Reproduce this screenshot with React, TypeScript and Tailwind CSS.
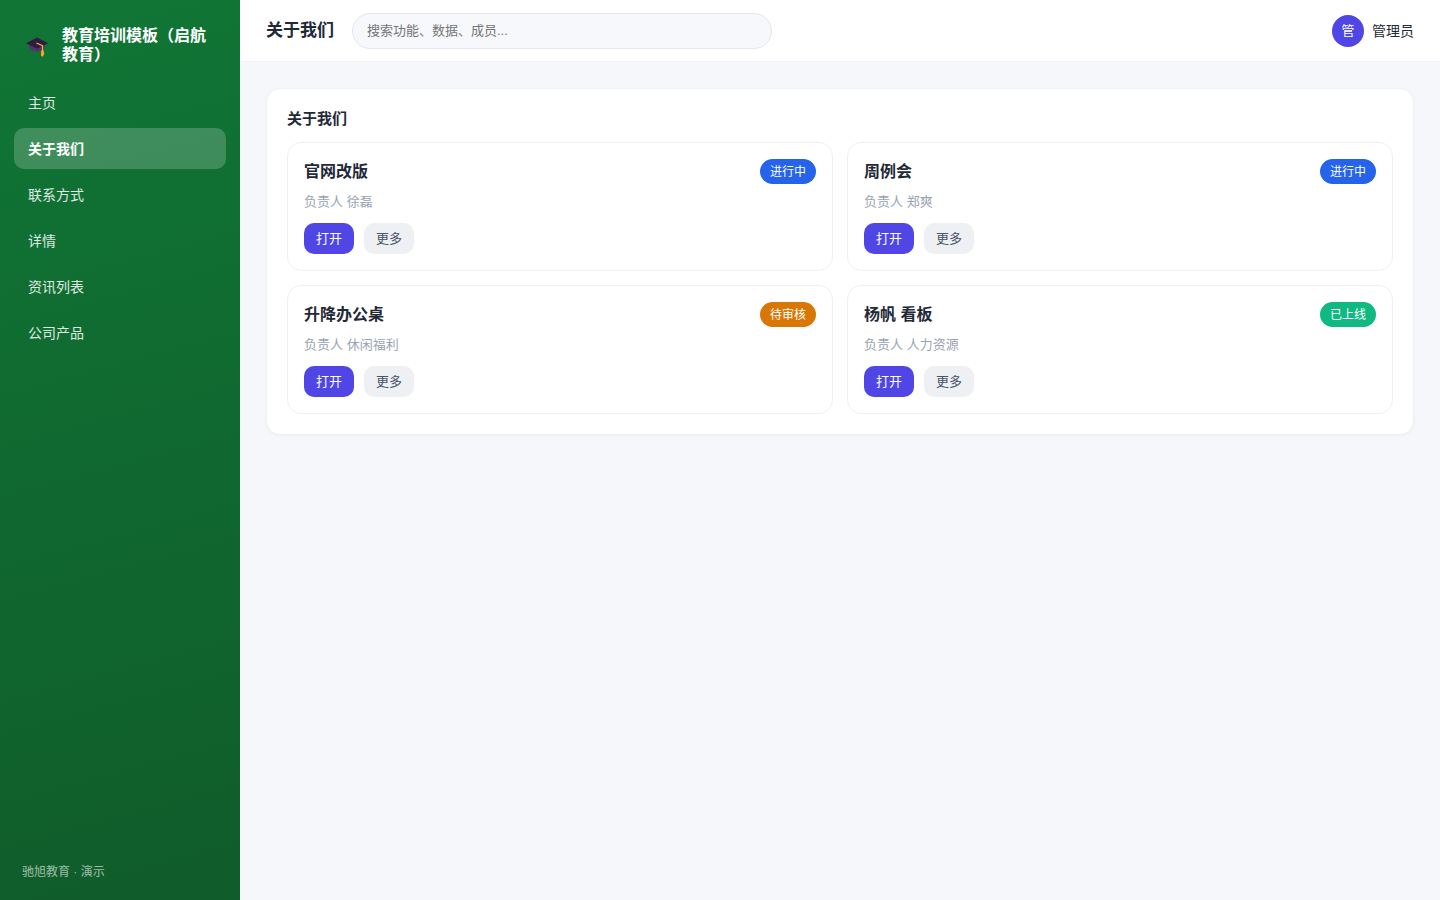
interface Project {
  title: string;
  owner: string;
  status: "进行中" | "待审核" | "已上线";
}

const navItems = ["主页", "关于我们", "联系方式", "详情", "资讯列表", "公司产品"];

const projects: Project[] = [
  { title: "官网改版", owner: "徐磊", status: "进行中" },
  { title: "周例会", owner: "郑爽", status: "进行中" },
  { title: "升降办公桌", owner: "休闲福利", status: "待审核" },
  { title: "杨帆 看板", owner: "人力资源", status: "已上线" },
];

const statusColors = {
  进行中: "bg-[#2563eb]",
  待审核: "bg-[#d97706]",
  已上线: "bg-[#10b981]",
};

function GraduationCap() {
  return (
    <svg viewBox="0 0 22 24" className="w-[22px] h-6 shrink-0" aria-hidden="true">
      <path d="M3 11.5v3.500C4.200 17.400 7 18.600 10.600 18.600s6.800-1.200 8-3.600v-3.500z" fill="#533566" />
      <path d="M0 10.300 10.500 4.800c.4-.2.8-.2 1.200 0L22 10.300l-9.800 4.900c-.7.4-1.500.4-2.200 0z" fill="#321b41" />
      <path d="M10.300 10 16.500 12.600V18" fill="none" stroke="#fbb03b" strokeWidth="1.2" />
      <path d="M15.200 17.500h2.400l.6 3.500-1.400 2.800-1.800-1z" fill="#f9a825" />
    </svg>
  );
}

function Sidebar() {
  return (
    <aside className="w-60 shrink-0 flex flex-col bg-[linear-gradient(165deg,#107636,#105c2a)] text-white">
      <div className="flex items-center gap-3.5 pl-[26px] pr-5 pt-[26px] pb-[18px]">
        <GraduationCap />
        <h1 className="text-base leading-[19px] font-bold">教育培训模板（启航教育）</h1>
      </div>
      <nav className="flex flex-col gap-[5px] px-3.5">
        {navItems.map((item) => (
          <a
            key={item}
            href="#"
            className={`h-[41px] flex items-center px-3.5 rounded-[10px] text-sm ${
              item === "关于我们" ? "bg-white/20 font-bold" : "text-white/85"
            }`}
          >
            {item}
          </a>
        ))}
      </nav>
      <p className="mt-auto px-[22px] pb-5 text-xs leading-4 text-white/60">驰旭教育 · 演示</p>
    </aside>
  );
}

function ProjectCard({ project }: { project: Project }) {
  return (
    <article className="bg-white border border-[#eef0f4] rounded-[14px] p-4">
      <div className="flex items-center justify-between">
        <h3 className="text-base leading-[25px] font-bold">{project.title}</h3>
        <span className={`${statusColors[project.status]} text-white text-xs rounded-full h-[25px] px-2.5 flex items-center`}>
          {project.status}
        </span>
      </div>
      <p className="mt-2 text-[13px] leading-5 text-[#9aa3b2]">负责人 {project.owner}</p>
      <div className="flex gap-2.5 mt-[11px]">
        <button className="h-[31px] px-3 rounded-[10px] bg-[#4f46e5] text-white text-[13px]">打开</button>
        <button className="h-[31px] px-3 rounded-[10px] bg-[#eef0f4] text-[#475569] text-[13px]">更多</button>
      </div>
    </article>
  );
}

export default function App() {
  return (
    <div className="min-h-screen flex bg-[#f5f7fb] text-[#1f2937] font-['Liberation_Sans','Noto_Sans_CJK_SC',sans-serif]">
      <Sidebar />
      <div className="flex-1 min-w-0">
        <header className="h-[62px] px-[26px] flex items-center bg-white border-b border-[#eef0f4]">
          <h2 className="text-[17px] leading-6 font-bold shrink-0">关于我们</h2>
          <input
            type="search"
            aria-label="搜索"
            placeholder="搜索功能、数据、成员..."
            className="ml-[18px] w-full max-w-[420px] h-9 px-3.5 rounded-full border border-[#e2e6ee] bg-[#f6f8fc] text-[13px] placeholder:text-[#757575]"
          />
          <div className="ml-auto flex items-center gap-2 shrink-0">
            <span className="size-8 rounded-full bg-[#4f46e5] text-white text-[13px] flex items-center justify-center">管</span>
            <span className="text-sm">管理员</span>
          </div>
        </header>
        <main className="p-[26px]">
          <section className="bg-white border border-[#eef0f4] rounded-[14px] p-5 shadow-[0_1px_3px_rgba(16,24,40,0.04)]">
            <h2 className="text-[15px] leading-5 font-bold mb-[13px]">关于我们</h2>
            <div className="grid grid-cols-2 gap-3.5">
              {projects.map((project) => (
                <ProjectCard key={project.title} project={project} />
              ))}
            </div>
          </section>
        </main>
      </div>
    </div>
  );
}
